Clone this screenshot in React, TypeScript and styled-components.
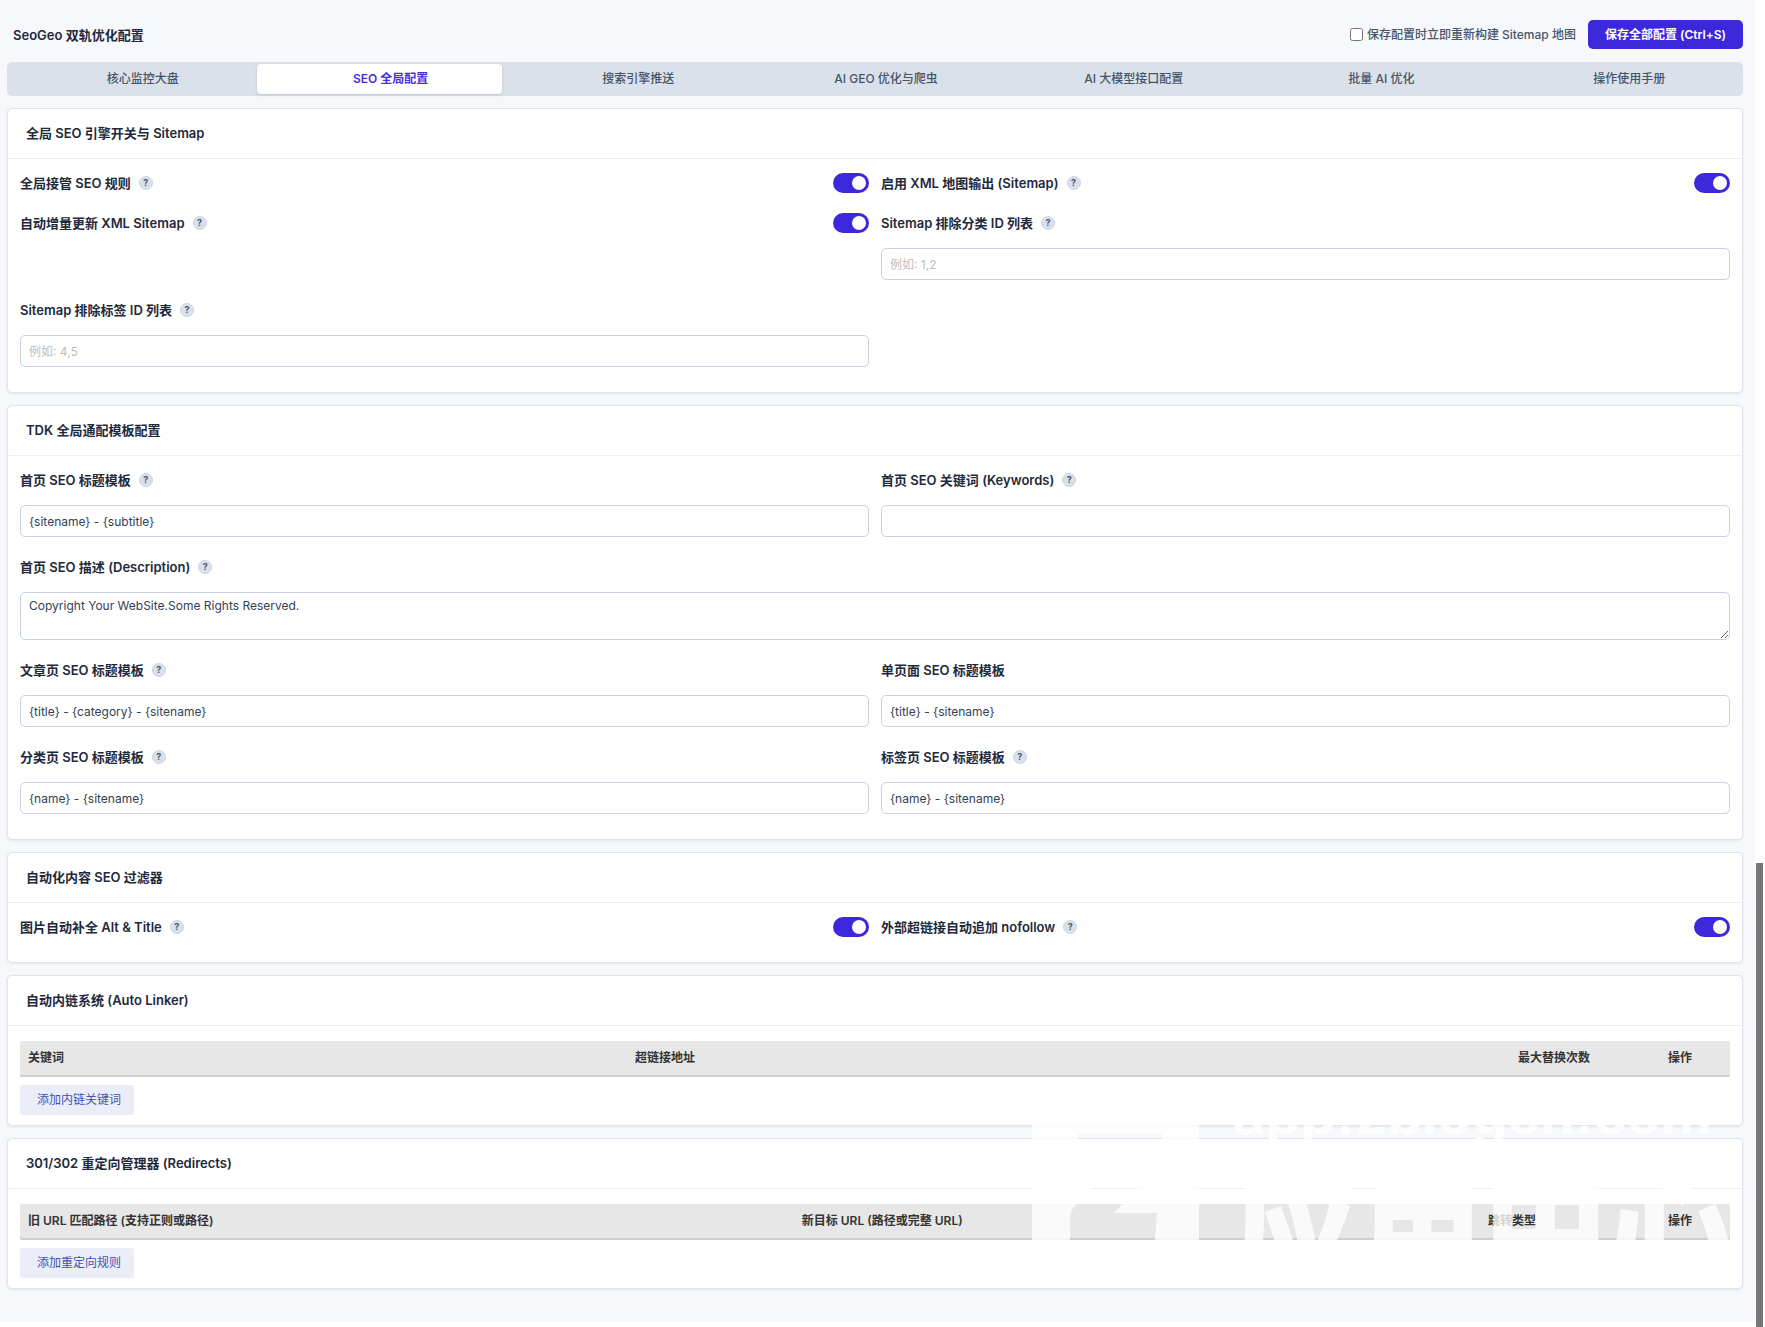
import React, { useId, useState } from 'react';
import styled, { createGlobalStyle, css } from 'styled-components';

const font = `Inter, "Noto Sans CJK SC", sans-serif`;
const accent = '#3c27db';

const GlobalStyle = createGlobalStyle`
  *, *::before, *::after { box-sizing: border-box; }
  html { scrollbar-width: none; }
  body {
    margin: 0;
    background: #ffffff;
    color: #1e293b;
    font-family: ${font};
    font-size: 12px;
    line-height: 20px;
  }
  button, input, textarea { font: inherit; color: inherit; }
`;

const Page = styled.main`
  margin-right: 10px;
  padding: 20px 12px 33px 7px;
  background: #f7f8fc;
`;

const TopBar = styled.header`
  display: flex;
  align-items: center;
  justify-content: space-between;
  gap: 12px;
  padding-left: 6px;
  margin-bottom: 13px;
`;

const PageTitle = styled.h1`
  margin: 0;
  font-size: 13px;
  font-weight: 600;
`;

const TopActions = styled.div`
  display: flex;
  align-items: center;
  gap: 12px;
`;

const RebuildOption = styled.label`
  display: flex;
  align-items: center;
  gap: 4px;
  color: #475569;
  font-weight: 500;
`;

const Checkbox = styled.input`
  width: 13px;
  height: 13px;
  margin: 0;
`;

const SaveButton = styled.button`
  height: 29px;
  padding: 0 17px;
  border: 0;
  border-radius: 5px;
  background: ${accent};
  color: #ffffff;
  font-weight: 600;
  white-space: nowrap;
  cursor: pointer;
`;

const Tabs = styled.div`
  display: flex;
  gap: 2px;
  padding: 2px;
  margin-bottom: 12px;
  border-radius: 5px;
  background: #dbe1eb;
`;

const Tab = styled.button<{ $active: boolean }>`
  flex: 1 1 0;
  height: 30px;
  padding: 0 8px 0 30px;
  border: 0;
  border-radius: 4px;
  background: transparent;
  color: #475569;
  font-weight: 500;
  cursor: pointer;
  ${(p) =>
    p.$active &&
    css`
      background: #ffffff;
      color: #4a2fe0;
      font-weight: 600;
      box-shadow: 0 1px 3px rgba(15, 23, 42, 0.15);
    `}
`;

const Sections = styled.div`
  display: flex;
  flex-direction: column;
  gap: 12px;
`;

const Card = styled.section`
  position: relative;
  border: 1px solid #dde4ee;
  border-radius: 5px;
  background: #ffffff;
  box-shadow: 0 1px 3px rgba(15, 23, 42, 0.08);
`;

const CardTitle = styled.h2`
  margin: 0;
  padding: 14px 18px 15px;
  border-bottom: 1px solid #eceff5;
  font-size: 13px;
  font-weight: 600;
  line-height: 20px;
`;

const FieldGrid = styled.div`
  display: grid;
  grid-template-columns: repeat(2, minmax(0, 1fr));
  gap: 20px 12px;
  align-items: start;
  padding: 14px 12px 25px;
`;

const FieldBox = styled.div<{ $wide?: boolean }>`
  display: flex;
  flex-direction: column;
  gap: 15px;
  grid-column: ${(p) => (p.$wide ? '1 / -1' : 'auto')};
`;

const FieldHead = styled.div`
  display: flex;
  align-items: center;
  gap: 8px;
  min-height: 20px;
`;

const FieldLabel = styled.label`
  font-size: 13px;
  font-weight: 600;
`;

const Help = styled.button`
  display: grid;
  place-items: center;
  width: 14px;
  height: 14px;
  padding: 0;
  border: 1px solid #ccd5e3;
  border-radius: 50%;
  background: #d9e0eb;
  color: #475569;
  font-size: 9px;
  font-weight: 700;
  line-height: 12px;
  cursor: help;
`;

const controlStyle = css`
  display: block;
  width: 100%;
  border: 1px solid #c8d2e1;
  border-radius: 5px;
  background: #ffffff;
  color: #334155;
  outline: none;
  &:focus {
    border-color: ${accent};
  }
`;

const TextInput = styled.input`
  ${controlStyle}
  height: 32px;
  padding: 0 8px;
  &::placeholder {
    color: #bdbdbd;
  }
`;

const TextArea = styled.textarea`
  ${controlStyle}
  height: 48px;
  padding: 3px 8px;
  resize: vertical;
`;

const Toggle = styled.input`
  appearance: none;
  display: flex;
  align-items: center;
  width: 36px;
  height: 20px;
  margin: 0 0 0 auto;
  padding: 0 3px;
  border-radius: 10px;
  background: #cbd5e1;
  cursor: pointer;
  &::before {
    content: '';
    width: 14px;
    height: 14px;
    border-radius: 50%;
    background: #ffffff;
  }
  &:checked {
    justify-content: flex-end;
    background: ${accent};
  }
`;

const TableArea = styled.div`
  display: flex;
  flex-direction: column;
  align-items: flex-start;
  gap: 8px;
  padding: 15px 12px 10px;
`;

const RuleTable = styled.table`
  width: 100%;
  table-layout: fixed;
  border-collapse: separate;
  border-spacing: 0;
  border-radius: 2px;
  background: #e7e7e7;
  box-shadow: inset 0 -2px 0 #cfcfcf;
`;

const HeadCell = styled.th<{ $width?: string }>`
  width: ${(p) => p.$width ?? 'auto'};
  height: 36px;
  padding: 0 8px 2px;
  color: #333333;
  font-size: 12px;
  font-weight: 600;
  text-align: left;
`;

const AddButton = styled.button`
  height: 30px;
  padding: 0 13px 0 17px;
  border: 0;
  border-radius: 2px;
  background: #ebedf9;
  color: #3f51b5;
  cursor: pointer;
`;

const Watermark = styled.div`
  position: absolute;
  top: -55px;
  right: 9px;
  display: flex;
  gap: 34px;
  color: rgba(255, 255, 255, 0.78);
  pointer-events: none;
  user-select: none;
`;

const WatermarkText = styled.div`
  display: flex;
  flex-direction: column;
  gap: 12px;
  white-space: nowrap;
`;

const WatermarkDomain = styled.span`
  font-size: 56px;
  font-weight: 700;
  line-height: 60px;
`;

const WatermarkName = styled.span`
  font-family: "Noto Sans CJK SC", sans-serif;
  font-size: 125px;
  font-weight: 900;
  line-height: 125px;
`;

const ScrollThumb = styled.div`
  position: fixed;
  right: 2px;
  bottom: 0;
  width: 7px;
  height: 35vh;
  background: #777777;
`;

type FieldProps = {
  label: string;
  help?: boolean;
  kind?: 'text' | 'area' | 'switch';
  value?: string;
  placeholder?: string;
};

function Field({ label, help = true, kind = 'text', value = '', placeholder }: FieldProps) {
  const id = useId();
  return (
    <FieldBox $wide={kind === 'area'}>
      <FieldHead>
        <FieldLabel htmlFor={id}>{label}</FieldLabel>
        {help && <Help type="button">?</Help>}
        {kind === 'switch' && <Toggle id={id} type="checkbox" role="switch" defaultChecked />}
      </FieldHead>
      {kind === 'text' && <TextInput id={id} type="text" defaultValue={value} placeholder={placeholder} />}
      {kind === 'area' && <TextArea id={id} defaultValue={value} />}
    </FieldBox>
  );
}

type Column = { title: string; width?: string };

function RuleList({ columns, action }: { columns: Column[]; action: string }) {
  return (
    <TableArea>
      <RuleTable>
        <thead>
          <tr>
            {columns.map((c) => (
              <HeadCell key={c.title} scope="col" $width={c.width}>
                {c.title}
              </HeadCell>
            ))}
          </tr>
        </thead>
      </RuleTable>
      <AddButton type="button">{action}</AddButton>
    </TableArea>
  );
}

const tabs = [
  '核心监控大盘',
  'SEO 全局配置',
  '搜索引擎推送',
  'AI GEO 优化与爬虫',
  'AI 大模型接口配置',
  '批量 AI 优化',
  '操作使用手册',
];

const linkColumns: Column[] = [
  { title: '关键词', width: '35.5%' },
  { title: '超链接地址' },
  { title: '最大替换次数', width: '150px' },
  { title: '操作', width: '70px' },
];

const redirectColumns: Column[] = [
  { title: '旧 URL 匹配路径 (支持正则或路径)', width: '45.25%' },
  { title: '新目标 URL (路径或完整 URL)' },
  { title: '跳转类型', width: '180px' },
  { title: '操作', width: '70px' },
];

export default function App() {
  const [active, setActive] = useState(1);
  return (
    <>
      <GlobalStyle />
      <Page>
        <TopBar>
          <PageTitle>SeoGeo 双轨优化配置</PageTitle>
          <TopActions>
            <RebuildOption>
              <Checkbox type="checkbox" />
              保存配置时立即重新构建 Sitemap 地图
            </RebuildOption>
            <SaveButton type="button">保存全部配置 (Ctrl+S)</SaveButton>
          </TopActions>
        </TopBar>

        <Tabs role="tablist">
          {tabs.map((t, i) => (
            <Tab
              key={t}
              type="button"
              role="tab"
              aria-selected={i === active}
              $active={i === active}
              onClick={() => setActive(i)}
            >
              {t}
            </Tab>
          ))}
        </Tabs>

        <Sections>
          <Card>
            <CardTitle>全局 SEO 引擎开关与 Sitemap</CardTitle>
            <FieldGrid>
              <Field kind="switch" label="全局接管 SEO 规则" />
              <Field kind="switch" label="启用 XML 地图输出 (Sitemap)" />
              <Field kind="switch" label="自动增量更新 XML Sitemap" />
              <Field label="Sitemap 排除分类 ID 列表" placeholder="例如: 1,2" />
              <Field label="Sitemap 排除标签 ID 列表" placeholder="例如: 4,5" />
            </FieldGrid>
          </Card>

          <Card>
            <CardTitle>TDK 全局通配模板配置</CardTitle>
            <FieldGrid>
              <Field label="首页 SEO 标题模板" value="{sitename} - {subtitle}" />
              <Field label="首页 SEO 关键词 (Keywords)" />
              <Field
                kind="area"
                label="首页 SEO 描述 (Description)"
                value="Copyright Your WebSite.Some Rights Reserved."
              />
              <Field label="文章页 SEO 标题模板" value="{title} - {category} - {sitename}" />
              <Field label="单页面 SEO 标题模板" help={false} value="{title} - {sitename}" />
              <Field label="分类页 SEO 标题模板" value="{name} - {sitename}" />
              <Field label="标签页 SEO 标题模板" value="{name} - {sitename}" />
            </FieldGrid>
          </Card>

          <Card>
            <CardTitle>自动化内容 SEO 过滤器</CardTitle>
            <FieldGrid>
              <Field kind="switch" label="图片自动补全 Alt & Title" />
              <Field kind="switch" label="外部超链接自动追加 nofollow" />
            </FieldGrid>
          </Card>

          <Card>
            <CardTitle>自动内链系统 (Auto Linker)</CardTitle>
            <RuleList columns={linkColumns} action="添加内链关键词" />
          </Card>

          <Card>
            <CardTitle>301/302 重定向管理器 (Redirects)</CardTitle>
            <RuleList columns={redirectColumns} action="添加重定向规则" />
            <Watermark aria-hidden="true">
              <svg width="167" height="167" viewBox="0 0 167 167" fill="currentColor">
                <path
                  fillRule="evenodd"
                  d="M0 0H167V167H0ZM46 49V73H92L46 118Q38 126 38 134V156H123L125 129H82L130 80V49Z"
                />
              </svg>
              <WatermarkText>
                <WatermarkDomain>app.zblogcn.com</WatermarkDomain>
                <WatermarkName>应用中心</WatermarkName>
              </WatermarkText>
            </Watermark>
          </Card>
        </Sections>
      </Page>
      <ScrollThumb />
    </>
  );
}
